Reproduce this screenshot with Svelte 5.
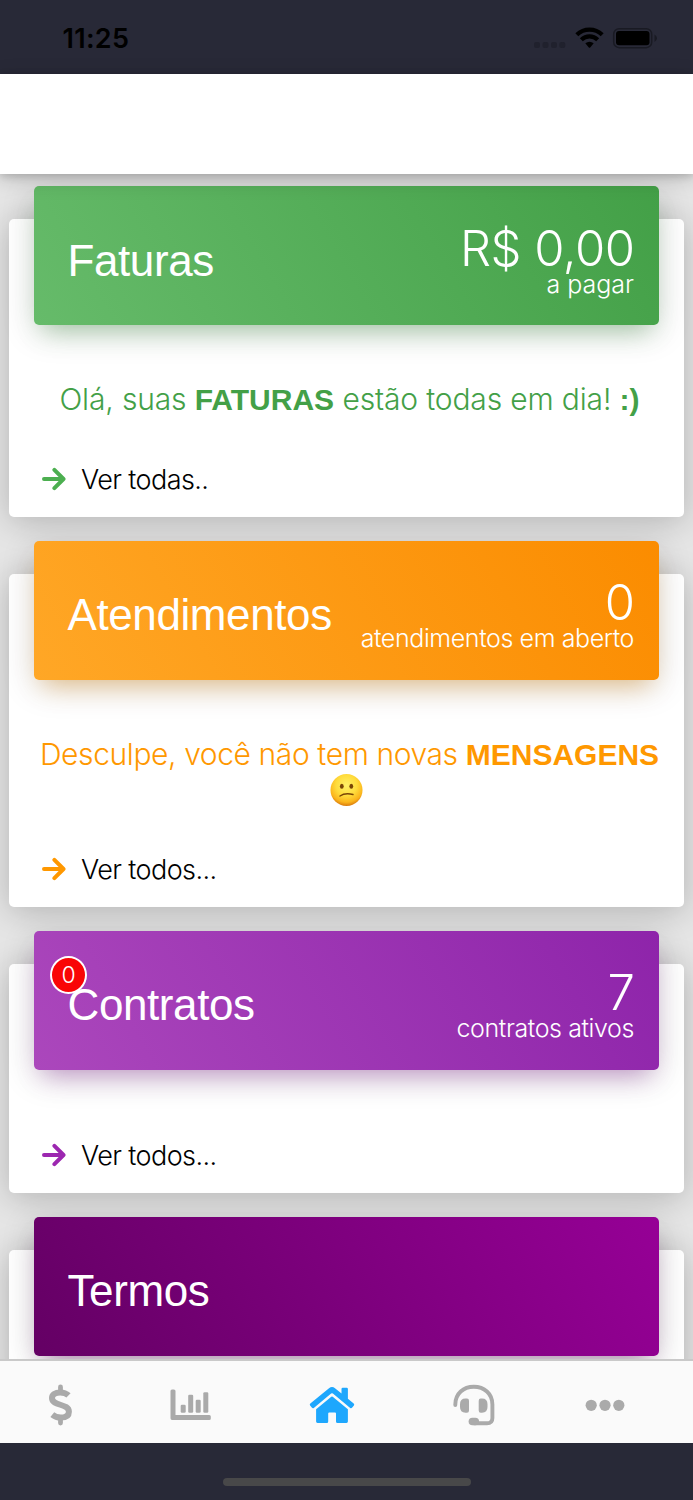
<script>
  const cards = [
    { kind: 'green', title: 'Faturas', value: 'R$ 0,00', note: 'a pagar', link: 'Ver todas..' },
    { kind: 'orange', title: 'Atendimentos', value: '0', note: 'atendimentos em aberto', link: 'Ver todos...' },
    { kind: 'purple', title: 'Contratos', value: '7', note: 'contratos ativos', link: 'Ver todos...', badge: '0' },
    { kind: 'plum', title: 'Termos' }
  ];
</script>

<div class="phone">
  <header class="status">
    <span class="time">11:25</span>
    <svg class="system" width="124" height="24" viewBox="0 0 124 24">
      <g fill="#20212d">
        <rect x="1" y="15" width="6" height="6" rx="2" />
        <rect x="9.5" y="15" width="6" height="6" rx="2" />
        <rect x="18" y="15" width="6" height="6" rx="2" />
        <rect x="26.3" y="15" width="6" height="6" rx="2" />
      </g>
      <g fill="none" stroke="#000" stroke-width="4.300">
        <path d="M43.800 7.700C51 1 62 1 69.200 7.700" />
        <path d="M48.300 12.700C53 8.300 60 8.300 64.700 12.700" />
      </g>
      <path d="M52.300 16.300Q56.500 13.100 60.700 16.300L57.200 20.400Q56.500 21.100 55.800 20.400Z" />
      <rect x="80.700" y="1.700" width="38" height="19" rx="5.500" fill="none" stroke="#191a23" stroke-width="1.500" />
      <rect x="83" y="4" width="33.500" height="14.300" rx="3" />
      <path d="M121.500 7.500Q124 9 124 11.200T121.500 15Z" fill="#191a23" />
    </svg>
  </header>

  <div class="toolbar"></div>

  <main>
    {#each cards as card}
      <section class="card {card.kind}">
        <div class="banner">
          <h2>{card.title}</h2>
          {#if card.badge}<span class="badge">{card.badge}</span>{/if}
          {#if card.value}
            <div class="figures">
              <span class="value">{card.value}</span>
              <span class="note">{card.note}</span>
            </div>
          {/if}
        </div>
        {#if card.kind === 'green'}
          <p class="message paid">Olá, suas <b>FATURAS</b> estão todas em dia! <b>:)</b></p>
        {:else if card.kind === 'orange'}
          <p class="message inbox">
            Desculpe, você não tem novas <b>MENSAGENS</b>
          </p>
          <svg class="face" width="34" height="34" viewBox="0 0 34 34">
            <defs>
              <radialGradient id="skin" cx=".5" cy=".35" r=".65">
                <stop offset="0" stop-color="#fff066" />
                <stop offset=".5" stop-color="#ffdc3c" />
                <stop offset=".82" stop-color="#fbb51c" />
                <stop offset="1" stop-color="#d97a0c" />
              </radialGradient>
            </defs>
            <circle cx="16.500" cy="17" r="16" fill="url(#skin)" />
            <ellipse cx="11.800" cy="13.300" rx="1.900" ry="2.500" fill="#7a4506" />
            <ellipse cx="21.300" cy="13.300" rx="1.900" ry="2.500" fill="#7a4506" />
            <path d="M10 23Q15 19.500 23 21.500" fill="none" stroke="#7a4506" stroke-width="1.400" stroke-linecap="round" />
          </svg>
        {/if}
        {#if card.link}
          <div class="more">
            <svg width="24" height="24" viewBox="0 0 24 24">
              <path d="M2 12H21M12.400 2.800L21.500 12L12.400 21.200" fill="none" stroke="currentColor" stroke-width="4" stroke-linecap="round" stroke-linejoin="round" />
            </svg>
            <span>{card.link}</span>
          </div>
        {/if}
      </section>
    {/each}
  </main>

  <nav>
    <div class="tab">
      <svg width="24" height="42" viewBox="0 0 24 42">
        <path d="M11.500 3V7M11.500 35V39" stroke="currentColor" stroke-width="4.800" stroke-linecap="round" />
        <path d="M19.500 11.400C17 9 14.500 8.400 11.200 8.400C6.200 8.400 3 10.600 3 14C3 22.500 19.900 19 19.900 27.800C19.900 31.700 16.800 33.600 11.800 33.600C8.300 33.600 5.700 32.600 3.300 30.600" fill="none" stroke="currentColor" stroke-width="6" />
      </svg>
    </div>
    <div class="tab">
      <svg width="42" height="42" viewBox="0 0 42 42">
        <path d="M2 5.500H3.900Q5.500 5.500 5.500 7V31H39.300Q40.800 31 40.800 32.500V34.500Q40.800 36 39.300 36H2Q.5 36 .5 34.300V7Q.5 5.500 2 5.500Z" />
        <rect x="10.700" y="20.700" width="5" height="8" rx="1.300" />
        <rect x="18.200" y="10.700" width="5" height="18" rx="1.300" />
        <rect x="25.700" y="15.700" width="5" height="13" rx="1.300" />
        <rect x="33.300" y="8.200" width="5" height="20.500" rx="1.300" />
      </svg>
    </div>
    <div class="tab active">
      <svg width="46" height="42" viewBox="0 0 46 42">
        <path d="M20 4.300Q23 1.800 26 4.300L32.500 9.600V5Q32.500 3.800 33.700 3.800H37.700Q38.900 3.800 38.900 5V14.800L44.700 19.600Q45.700 20.500 44.900 21.500L43 23.800Q42.200 24.700 41.200 23.900L23.900 9.600Q23 8.900 22.100 9.600L4.800 23.900Q3.800 24.700 3 23.800L1.100 21.500Q.3 20.500 1.300 19.600Z" />
        <path d="M22.300 12.800Q23 12.200 23.700 12.800L38.900 25.300V37.600Q38.900 39 37.500 39H28.500Q27 39 27 37.500V29.500Q27 28.500 26 28.500H20.200Q19.200 28.500 19.200 29.500V37.500Q19.200 39 17.800 39H8.500Q7.100 39 7.100 37.600V25.300Z" />
      </svg>
    </div>
    <div class="tab">
      <svg width="42" height="42" viewBox="0 0 42 42">
        <path d="M2.300 21V20.500C2.300 9.500 10.500 2.700 20.800 2.700S39.400 9.500 39.400 20.500V34Q39.400 39.300 34 39.300H21" fill="none" stroke="currentColor" stroke-width="3.900" stroke-linecap="round" />
        <path d="M12.500 14.500H14Q16 14.500 16 16.700V26.500Q16 28.700 14 28.700H12.500Q7 28.700 7 23V20.200Q7 14.500 12.500 14.500ZM29 14.500H27.700Q25.700 14.500 25.700 16.700V26.500Q25.700 28.700 27.700 28.700H29Q34.500 28.700 34.500 23V20.200Q34.500 14.500 29 14.500Z" />
        <rect x="15.600" y="33.700" width="10.500" height="7.600" rx="3.800" />
      </svg>
    </div>
    <div class="tab">
      <svg width="42" height="42" viewBox="0 0 42 42">
        <circle cx="7.200" cy="21.300" r="5.600" />
        <circle cx="21" cy="21.300" r="5.600" />
        <circle cx="34.800" cy="21.300" r="5.600" />
      </svg>
    </div>
  </nav>
  <footer><span class="indicator"></span></footer>
</div>

<style>
  :global(body) { margin: 0; }
  .phone {
    width: 693px;
    height: 1500px;
    display: flex;
    flex-direction: column;
    overflow: hidden;
    background: #e5e5e5;
    font-family: Inter, "Liberation Sans", sans-serif;
    font-weight: 300;
    color: #000;
  }
  .status {
    box-sizing: border-box;
    flex: 0 0 73.5px;
    padding: 0 36px 0 62.500px;
    display: flex;
    align-items: center;
    justify-content: space-between;
    background: #282937;
  }
  .time { font-weight: 600; font-size: 27px; line-height: 30px; padding-top: 5px; letter-spacing: .3px; }
  .system { margin-top: 4.500px; }
  .toolbar {
    flex: 0 0 100.500px;
    z-index: 2;
    background: #fff;
    box-shadow: 0 2px 8px rgba(0, 0, 0, .16), 0 5px 20px rgba(0, 0, 0, .18);
  }
  main {
    flex: 1;
    min-height: 0;
    display: flex;
    flex-direction: column;
    gap: 57px;
    padding: 45.400px 9px 0;
  }
  .card {
    flex: none;
    box-sizing: border-box;
    display: flex;
    flex-direction: column;
    border-radius: 5px;
    background: #fff;
    box-shadow: 0 4px 32px rgba(0, 0, 0, .22);
  }
  .green { height: 297.600px; --tint: #43a047; --arrow: #4caf50; --glow: rgba(76, 175, 80, .4); --fill: linear-gradient(60deg, #66bb6a, #43a047); }
  .orange { height: 333px; --tint: #ff9800; --arrow: #ff9800; --glow: rgba(255, 152, 0, .4); --fill: linear-gradient(60deg, #ffa726, #fb8c00); }
  .purple { height: 229px; --arrow: #9c27b0; --glow: rgba(156, 39, 176, .4); --fill: linear-gradient(60deg, #ab47bc, #8e24aa); }
  .plum { height: 229px; --glow: rgba(100, 0, 100, .4); --fill: linear-gradient(60deg, #640064, #960096); }
  .banner {
    position: relative;
    box-sizing: border-box;
    flex: 0 0 139px;
    margin: -33.400px 25px 0;
    padding: 0 25.500px 0 33.500px;
    display: flex;
    align-items: center;
    justify-content: space-between;
    border-radius: 5px;
    color: #fff;
    background: var(--fill);
    box-shadow: 0 7px 34px rgba(0, 0, 0, .16), 0 14px 24px -10px var(--glow);
  }
  h2 {
    margin: 10px 0 0;
    font: 400 44px/52px "Liberation Sans", sans-serif;
    letter-spacing: -.4px;
  }
  .badge {
    position: absolute;
    left: 16px;
    top: 25px;
    box-sizing: border-box;
    width: 37px;
    height: 38px;
    border: 2px solid #fff;
    border-radius: 50%;
    background: #f90606;
    font-size: 23px;
    line-height: 34px;
    text-align: center;
  }
  .figures { display: flex; flex-direction: column; align-items: flex-end; padding-top: 7px; }
  .value { font-size: 49px; line-height: 52px; margin-bottom: -2px; font-weight: 300; letter-spacing: -.5px; margin-right: -1px; }
  .note { font-size: 25px; line-height: 23px; letter-spacing: -.4px; margin-right: -.5px; }
  .green .note { letter-spacing: 0; }
  .message {
    margin: 56px 0 0;
    text-align: center;
    font-size: 30px;
    line-height: 36px;
    color: var(--tint);
    white-space: nowrap;
    font-weight: 300;
  }
  .paid { padding-left: 6px; letter-spacing: -.15px; }
  .inbox { padding-left: 6px; letter-spacing: -.4px; }
  .message b { font: 700 30px/36px "Liberation Sans", sans-serif; letter-spacing: 0; }
  .face { align-self: center; }
  .more {
    margin: auto 0 20px 33px;
    display: flex;
    align-items: center;
    gap: 15px;
    font-size: 27px;
    line-height: 34px;
    letter-spacing: -.6px;
  }
  .more svg { color: var(--arrow); margin-top: -1px; }
  nav {
    box-sizing: border-box;
    flex: 0 0 83.500px;
    display: flex;
    padding: 23px 0 0 49px;
    z-index: 2;
    border-top: 2px solid #c9c9c9;
    background: #fafafa;
    color: #aaa;
  }
  .tab:nth-child(2) { margin-left: 96.500px; }
  .tab:nth-child(3) { margin-left: 97px; }
  .tab:nth-child(4) { margin-left: 98px; }
  .tab:nth-child(5) { margin-left: 89px; }
  .tab svg { display: block; fill: currentColor; }
  .active { color: #1ea7fd; }
  footer {
    flex: 0 0 57.500px;
    display: flex;
    justify-content: center;
    background: #282937;
  }
  .indicator { width: 248px; height: 8px; margin-top: 35.500px; border-radius: 4px; background: #484849; }
</style>
